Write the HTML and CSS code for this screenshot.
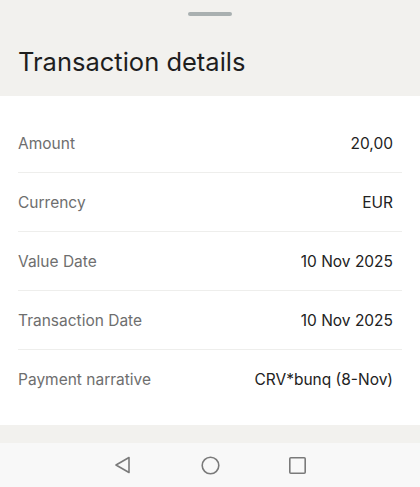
FILE: index.html
```html
<!DOCTYPE html>
<html lang="en">
<head>
    <meta charset="UTF-8">
    <meta name="viewport" content="width=device-width, initial-scale=1.0">
    <title>Transaction details</title>
    <link rel="stylesheet" href="styles.css">
</head>
<body>
    <div class="sheet">
        <div class="sheet-header">
            <div class="handle"></div>
            <h1>Transaction details</h1>
        </div>

        <div class="details">
            <div class="row">
                <span class="label">Amount</span>
                <span class="value">20,00</span>
            </div>
            <div class="row">
                <span class="label">Currency</span>
                <span class="value">EUR</span>
            </div>
            <div class="row">
                <span class="label">Value Date</span>
                <span class="value">10 Nov 2025</span>
            </div>
            <div class="row">
                <span class="label">Transaction Date</span>
                <span class="value">10 Nov 2025</span>
            </div>
            <div class="row">
                <span class="label">Payment narrative</span>
                <span class="value">CRV*bunq (8-Nov)</span>
            </div>
        </div>

        <div class="sheet-footer"></div>
    </div>

    <nav class="nav-bar">
        <svg width="18" height="18" viewBox="0 0 18 18" fill="none" stroke="#7a7a7a" stroke-width="1.6" stroke-linejoin="round">
            <path d="M15 1.5 L2 9 L15 16.5 Z"/>
        </svg>
        <svg width="19" height="19" viewBox="0 0 19 19" fill="none" stroke="#7a7a7a" stroke-width="1.6">
            <circle cx="9.5" cy="9.5" r="8.3"/>
        </svg>
        <svg width="17" height="17" viewBox="0 0 17 17" fill="none" stroke="#7a7a7a" stroke-width="1.6">
            <rect x="0.8" y="0.8" width="15.4" height="15.4" rx="1"/>
        </svg>
    </nav>
</body>
</html>
```

FILE: styles.css
```css
body {
    margin: 0;
    font-family: Inter, "Noto Sans", sans-serif;
    background-color: #f8f8f8;
    color: #222;
}
.sheet-header {
    background-color: #f2f1ee;
    height: 96px;
    padding: 0 18px;
    box-sizing: border-box;
    display: flex;
    flex-direction: column;
}
.handle {
    width: 44px;
    height: 4px;
    border-radius: 2px;
    background-color: #a9b0b0;
    margin: 12px auto 0;
}
h1 {
    margin: 31px 0 0;
    font-size: 25.5px;
    font-weight: 400;
    line-height: 30px;
    color: #1e1e1e;
}
.details {
    background-color: #fff;
    padding: 18px 18px 17px;
}
.row {
    display: flex;
    justify-content: space-between;
    align-items: center;
    height: 58px;
    border-bottom: 1px solid #eeeeec;
    font-size: 15.5px;
}
.row:last-child {
    border-bottom: none;
}
.label {
    color: #6e6e6e;
}
.value {
    color: #222;
    padding-right: 9px;
}
.sheet-footer {
    background-color: #f2f1ee;
    height: 18px;
}
.nav-bar {
    height: 44px;
    display: flex;
    justify-content: center;
    align-items: center;
    gap: 69px;
}
```
